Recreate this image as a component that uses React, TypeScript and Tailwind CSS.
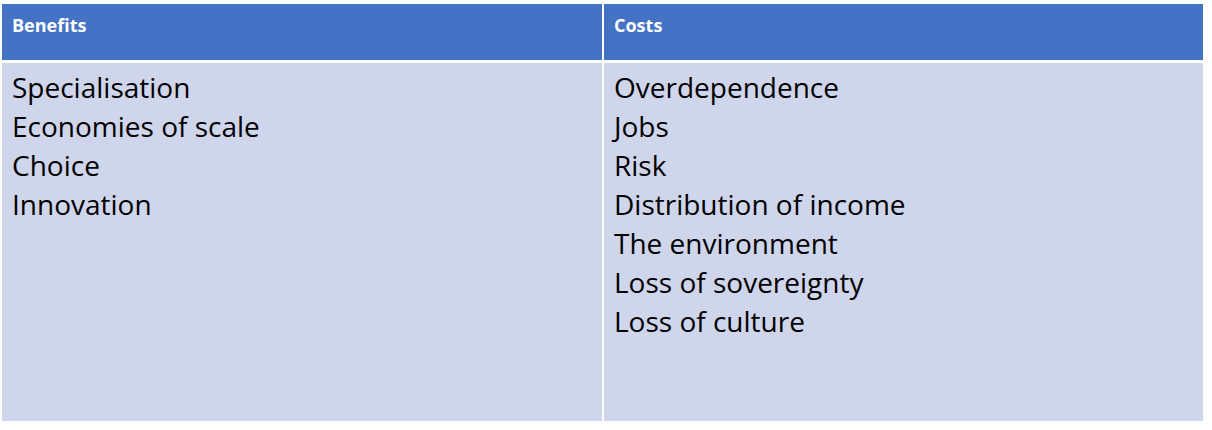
const benefits = ["Specialisation", "Economies of scale", "Choice", "Innovation"];
const costs = [
  "Overdependence",
  "Jobs",
  "Risk",
  "Distribution of income",
  "The environment",
  "Loss of sovereignty",
  "Loss of culture",
];

function Column({ title, items }: { title: string; items: string[] }) {
  return (
    <div className="flex flex-col gap-[3px]">
      <div className="h-[56px] bg-[#4472c4] px-[10px] pt-[9px] text-[18px] font-bold leading-[24px] text-white">
        {title}
      </div>
      <div className="h-[358px] bg-[#cfd5ea] px-[10px] pt-[5px] text-[28px] leading-[39px] text-black">
        {items.map((item) => (
          <p key={item}>{item}</p>
        ))}
      </div>
    </div>
  );
}

export default function App() {
  return (
    <div
      className="h-[430px] w-[1212px] bg-white pl-[2px] pt-[4px]"
      style={{ fontFamily: "'Open Sans', sans-serif" }}
    >
      <div className="grid w-[1201px] grid-cols-[600px_599px] gap-x-[2px]">
        <Column title="Benefits" items={benefits} />
        <Column title="Costs" items={costs} />
      </div>
    </div>
  );
}
